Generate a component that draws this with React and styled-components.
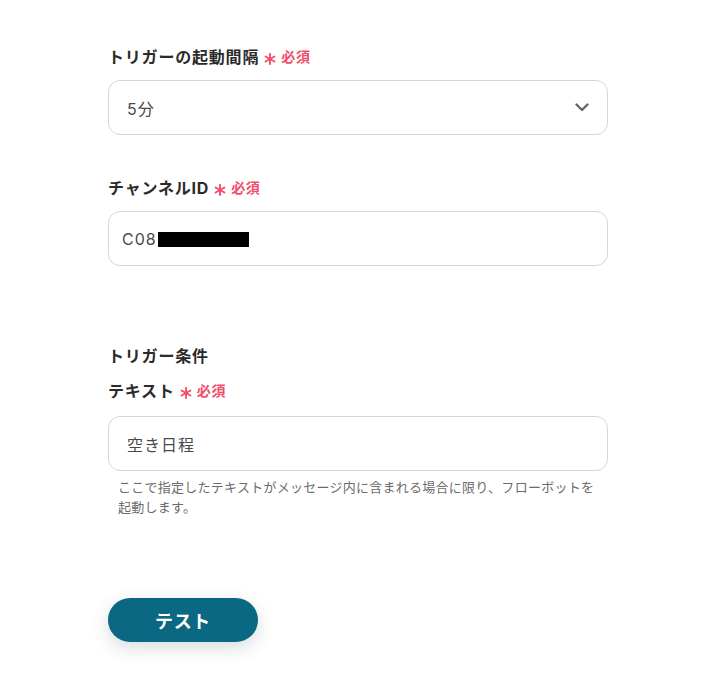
import React from 'react';
import styled, { createGlobalStyle } from 'styled-components';

const GlobalStyle = createGlobalStyle`
  body {
    margin: 0;
    background: #ffffff;
    font-family: "Inter", "Noto Sans CJK JP", sans-serif;
    color: #2b2b2b;
  }
`;

const Page = styled.div`
  padding: 45px 0 40px 108px;
  width: 500px;
  display: flex;
  flex-direction: column;
`;

const Field = styled.div`
  display: flex;
  flex-direction: column;
  margin-top: ${({ $gap }) => $gap || 0}px;
`;

const Label = styled.div`
  display: flex;
  align-items: center;
  font-size: 16px;
  line-height: 24px;
  font-weight: 700;
  letter-spacing: 0.05em;
  color: #2b2b2b;
`;

const Required = styled.span`
  display: inline-flex;
  align-items: center;
  gap: 5px;
  margin-left: 5px;
  color: #f24e6b;
  font-size: 14px;
  font-weight: 700;
  letter-spacing: 0.05em;

  svg {
    transform: translateY(2px);
  }
`;

const SectionTitle = styled.div`
  font-size: 16px;
  line-height: 24px;
  font-weight: 700;
  letter-spacing: 0.05em;
  color: #2b2b2b;
  margin-top: 78px;
`;

const Box = styled.div`
  box-sizing: border-box;
  height: 55px;
  margin-top: ${({ $top }) => $top || 11}px;
  border: 1px solid #d3d6dc;
  border-radius: 12px;
  display: flex;
  align-items: center;
  justify-content: space-between;
  padding: 0 18px 0 ${({ $pad }) => $pad || 18}px;
  font-size: 16px;
  letter-spacing: 0.06em;
  color: #4a4a4a;
`;

const Masked = styled.span`
  display: inline-block;
  vertical-align: -2px;
  width: 91px;
  height: 15px;
  background: #000;
  margin-left: 1px;
`;

const Help = styled.p`
  margin: 6px 0 0 10px;
  font-size: 13px;
  line-height: 20px;
  letter-spacing: 0.02em;
  color: #6b6b6b;
`;

const TestButton = styled.button`
  margin-top: 81px;
  width: 150px;
  height: 44px;
  border: none;
  border-radius: 22px;
  background: #0b6882;
  color: #ffffff;
  font-family: inherit;
  font-size: 18px;
  font-weight: 700;
  letter-spacing: 0.04em;
  box-shadow: 0 6px 18px rgba(40, 60, 80, 0.18);
  cursor: pointer;
`;

const Chevron = () => (
  <svg width="14" height="9" viewBox="0 0 14 9" fill="none">
    <path d="M1.5 1.5 L7 7 L12.5 1.5" stroke="#666" strokeWidth="2.4" strokeLinecap="round" strokeLinejoin="round" />
  </svg>
);

const Star = () => (
  <svg width="12" height="12" viewBox="0 0 12 12" fill="none">
    <g stroke="#f24e6b" strokeWidth="1.9" strokeLinecap="round">
      <path d="M6 0.9 V11.1" />
      <path d="M1.6 3.45 L10.4 8.55" />
      <path d="M1.6 8.55 L10.4 3.45" />
    </g>
  </svg>
);

const Req = () => (
  <Required>
    <Star />必須
  </Required>
);

export default function App() {
  return (
    <>
      <GlobalStyle />
      <Page>
        <Field>
          <Label>トリガーの起動間隔<Req /></Label>
          <Box>
            <span>5分</span>
            <Chevron />
          </Box>
        </Field>

        <Field $gap={41}>
          <Label>チャンネルID<Req /></Label>
          <Box $pad={13}>
            <span>C08<Masked /></span>
          </Box>
        </Field>

        <SectionTitle>トリガー条件</SectionTitle>
        <Field $gap={11}>
          <Label>テキスト<Req /></Label>
          <Box $top={13}>
            <span>空き日程</span>
          </Box>
          <Help>
            ここで指定したテキストがメッセージ内に含まれる場合に限り、フローボットを
            <br />
            起動します。
          </Help>
        </Field>

        <div>
          <TestButton>テスト</TestButton>
        </div>
      </Page>
    </>
  );
}
